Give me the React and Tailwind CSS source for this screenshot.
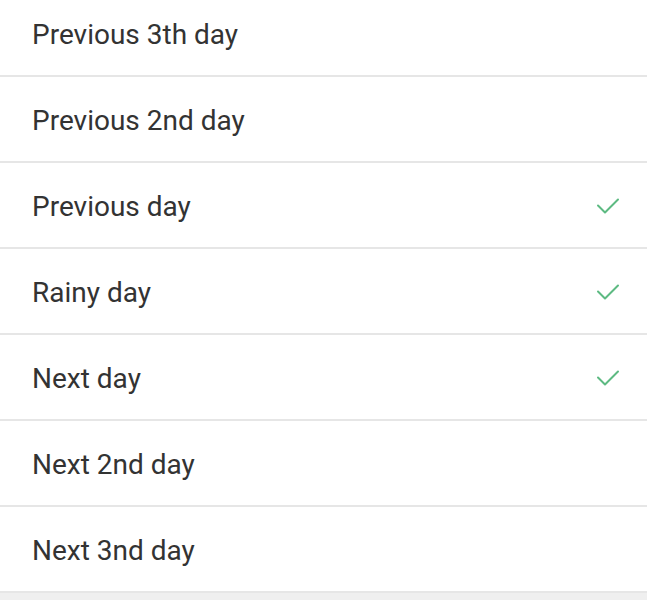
import React from 'react';

const rows = [
  { label: 'Previous 3th day', checked: false },
  { label: 'Previous 2nd day', checked: false },
  { label: 'Previous day', checked: true },
  { label: 'Rainy day', checked: true },
  { label: 'Next day', checked: true },
  { label: 'Next 2nd day', checked: false },
  { label: 'Next 3nd day', checked: false },
];

function Check() {
  return (
    <svg width="26" height="26" viewBox="0 0 26 26" fill="none" className="-mt-[5px]">
      <polyline
        points="3,13.5 10,20.5 23,7.5"
        stroke="#5dba82"
        strokeWidth="2"
        strokeLinecap="round"
        strokeLinejoin="round"
      />
    </svg>
  );
}

export default function App() {
  return (
    <div className="min-h-[600px] bg-[#efefef] font-['Roboto',sans-serif]">
      <div className="bg-white">
        {rows.map((row, i) => (
          <div
            key={row.label}
            className={`flex items-center justify-between border-b-2 border-[#e6e6e6] pl-[32px] pr-[26px] ${
              i === 0 ? 'h-[77px] pb-[6px]' : 'h-[86px] pt-[4px]'
            }`}
          >
            <span className="text-[28px] leading-none text-[#333333]">{row.label}</span>
            {row.checked && <Check />}
          </div>
        ))}
      </div>
    </div>
  );
}
